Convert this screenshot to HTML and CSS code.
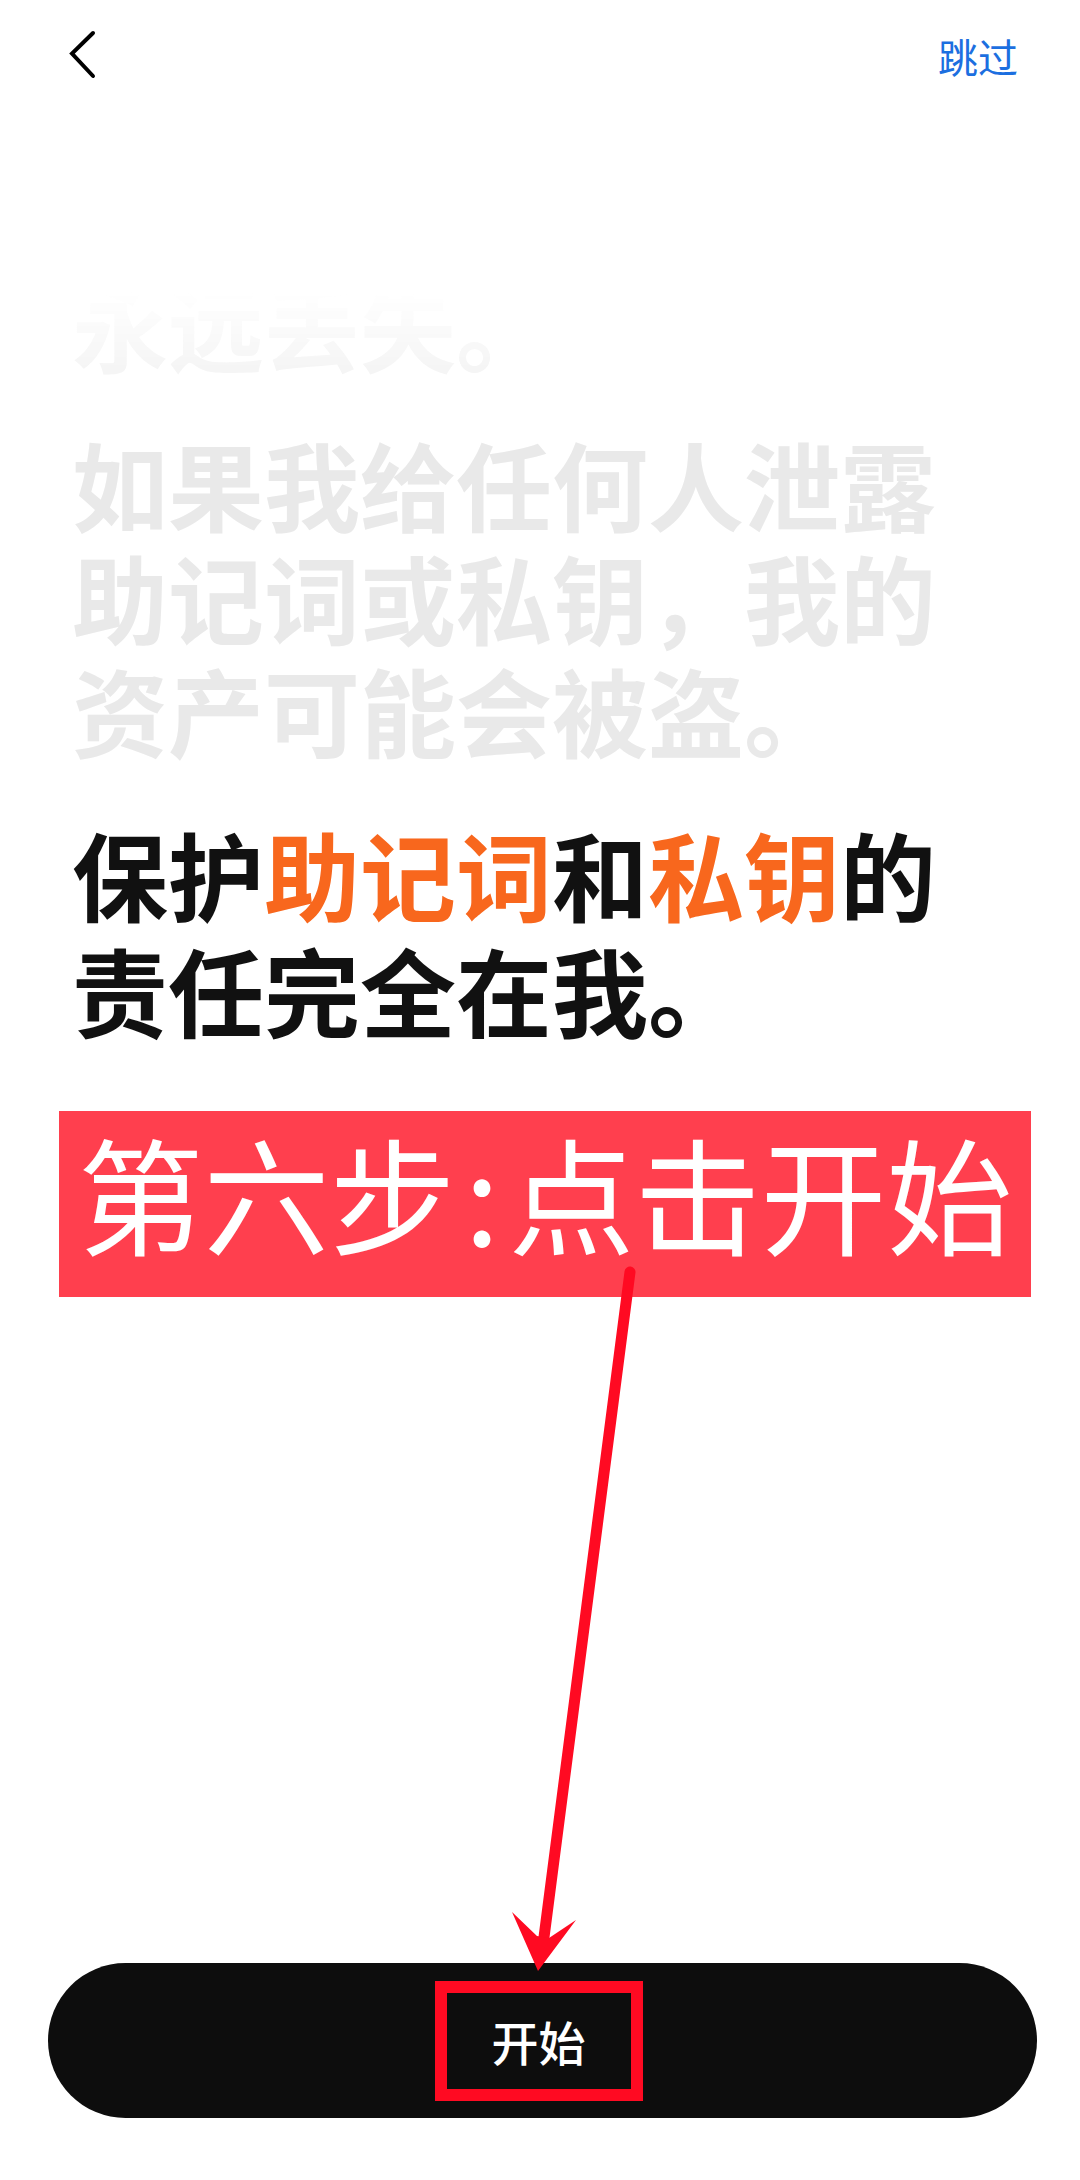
FILE: index.html
```html
<!DOCTYPE html>
<html lang="zh-CN">
<head>
<meta charset="utf-8">
<title>开始</title>
<link rel="stylesheet" href="styles.css">
</head>
<body>
<div class="page">
  <header class="topbar">
    <svg class="back" width="36" height="56" viewBox="0 0 36 56" aria-hidden="true">
      <polyline points="29,5 8,25.5 29,48" fill="none" stroke="#000" stroke-width="4" stroke-linecap="round" stroke-linejoin="miter"/>
    </svg>
    <span class="skip">跳过</span>
  </header>
  <main class="content">
    <p class="para faded">永远丢失。</p>
    <p class="para gray">如果我给任何人泄露<br>助记词或私钥，我的<br>资产可能会被盗。</p>
    <p class="para strong">保护<em class="hl">助记词</em>和<em class="hl">私钥</em>的<br>责任完全在我。</p>
    <div class="banner">第六步<span class="colon">:</span>点击开始</div>
  </main>
  <div class="spacer"></div>
  <div class="start"><span class="frame">开始</span></div>
  <svg class="arrow" width="1080" height="2180" viewBox="0 0 1080 2180" aria-hidden="true">
    <line x1="630" y1="1272" x2="543" y2="1945" stroke="#ff0a22" stroke-width="11" stroke-linecap="round"/>
    <polygon points="538,1971 576,1920 549,1938 537,1936 512,1912" fill="#ff0a22"/>
  </svg>
</div>
</body>
</html>
```

FILE: styles.css
```css
html, body {
  margin: 0;
  padding: 0;
  background: #ffffff;
}

body {
  width: 1080px;
  height: 2180px;
  overflow: hidden;
  font-family: "Noto Sans CJK SC", "Noto Sans", sans-serif;
}

.page {
  position: relative;
  width: 1080px;
  height: 2180px;
  display: flex;
  flex-direction: column;
}

.topbar {
  height: 112px;
  display: flex;
  align-items: center;
  justify-content: space-between;
  padding: 0 62px 0 64px;
  flex: none;
}

.back {
  display: block;
}

.skip {
  font-size: 40px;
  line-height: 40px;
  color: #1c6fe0;
  font-weight: 400;
}

.content {
  padding-top: 155px;
  flex: none;
}

.para {
  margin: 0;
  padding-left: 72px;
  font-size: 96px;
  font-weight: 700;
  white-space: nowrap;
}

.faded {
  line-height: 113px;
  color: #f5f5f5;
  -webkit-mask-image: linear-gradient(to bottom, transparent 22%, #000 90%);
  mask-image: linear-gradient(to bottom, transparent 22%, #000 90%);
}

.gray {
  margin-top: 46px;
  line-height: 113px;
  color: #e9e9e9;
}

.strong {
  margin-top: 50px;
  line-height: 116px;
  color: #111111;
}

.hl {
  font-style: normal;
  color: #f8671d;
}

.banner {
  margin: 64px 49px 0 59px;
  height: 186px;
  box-sizing: border-box;
  padding-bottom: 26px;
  background: #ff3f4e;
  color: #ffffff;
  display: flex;
  align-items: center;
  justify-content: center;
  font-size: 126px;
  line-height: 1;
  font-weight: 400;
  white-space: nowrap;
}

.colon {
  margin: 0 9px;
}

.spacer {
  flex: 1;
}

.start {
  flex: none;
  height: 155px;
  margin: 0 43px 62px 48px;
  border-radius: 78px;
  background: #0d0d0d;
  display: flex;
  align-items: center;
  justify-content: center;
}

.frame {
  box-sizing: border-box;
  width: 208px;
  height: 120px;
  margin-right: 8px;
  border: 12px solid #ff0a22;
  display: flex;
  align-items: center;
  justify-content: center;
  color: #ffffff;
  font-size: 47px;
  line-height: 1;
  font-weight: 500;
}

.arrow {
  position: absolute;
  left: 0;
  top: 0;
  pointer-events: none;
}
```
